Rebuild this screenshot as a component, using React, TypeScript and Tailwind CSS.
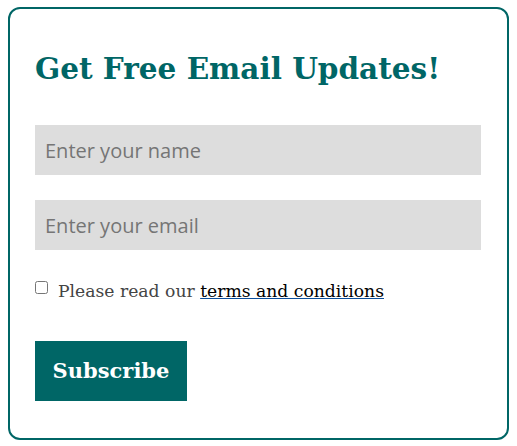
export default function App() {
  return (
    <div className="pt-[7px] pl-[8px]">
      <div className="w-[501px] h-[433px] border-2 border-[#006666] rounded-[12px] px-[25px] pt-[40px]" style={{ fontFamily: '"DejaVu Serif", Georgia, serif' }}>
        <h2 className="text-[#006666] font-bold text-[29.5px] leading-[40px] m-0">Get Free Email Updates!</h2>
        <div className="mt-[36px] flex flex-col gap-[25px]">
          <input
            className="w-[446px] h-[50px] bg-[#dddddd] px-[10px] text-[20px] outline-none placeholder:text-[#757575]"
            style={{ fontFamily: '"Open Sans", sans-serif' }}
            placeholder="Enter your name"
          />
          <input
            className="w-[446px] h-[50px] bg-[#dddddd] px-[10px] text-[20px] outline-none placeholder:text-[#757575]"
            style={{ fontFamily: '"Open Sans", sans-serif' }}
            placeholder="Enter your email"
          />
        </div>
        <label className="mt-[28px] flex items-center text-[17.2px] leading-[26px] text-[#444444]">
          <input type="checkbox" className="w-[13px] h-[13px] mr-[10px] mt-[-7px]" />
          <span>Please read our <a href="#" className="text-black underline decoration-[#0b4f9c]">terms and conditions</a></span>
        </label>
        <button className="mt-[37px] bg-[#006666] text-white font-bold text-[21px] w-[152px] h-[60px]">Subscribe</button>
      </div>
    </div>
  );
}
